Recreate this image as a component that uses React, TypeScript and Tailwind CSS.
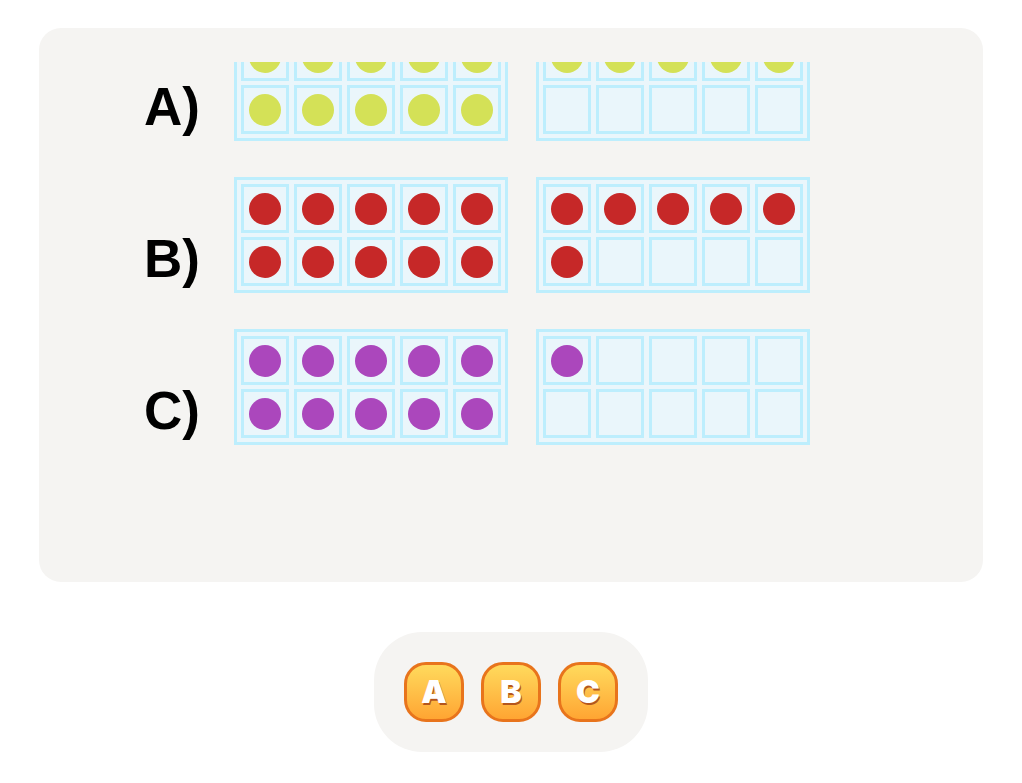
import React from 'react';

type Row = { label: string; color: string; counts: [number, number] };

const rows: Row[] = [
  { label: 'A)', color: 'bg-[#d4e157]', counts: [10, 5] },
  { label: 'B)', color: 'bg-[#c62828]', counts: [10, 6] },
  { label: 'C)', color: 'bg-[#ab47bc]', counts: [10, 1] },
];

// one ten-frame: 2 rows of 5 cells, filled left to right
const TenFrame: React.FC<{ filled: number; color: string }> = ({ filled, color }) => (
  <div className="border-[3px] border-[#bdeefd] bg-[#eaf6fb] p-[4px] grid grid-cols-5 gap-x-[5px] gap-y-[4px]">
    {Array.from({ length: 10 }).map((_, i) => (
      <div
        key={i}
        className="w-[48px] h-[49px] border-[3px] border-[#bdeefd] flex items-center justify-center"
      >
        {i < filled && <div className={`w-8 h-8 rounded-full ${color}`} />}
      </div>
    ))}
  </div>
);

const AnswerButton: React.FC<{ letter: string }> = ({ letter }) => (
  <button
    className="w-[60px] h-[60px] rounded-[22px] border-[3px] border-[#e8741c] bg-gradient-to-b from-[#ffda5c] to-[#ffa532] flex items-center justify-center text-white text-[32px] font-black leading-none [text-shadow:1px_2px_0_#b5561c]"
    style={{ fontFamily: 'Inter, "DejaVu Sans", sans-serif' }}
  >
    {letter}
  </button>
);

export default function App() {
  return (
    <div
      className="min-h-screen bg-white flex flex-col items-center pt-[28px]"
      style={{ fontFamily: '"Liberation Sans", Arial, sans-serif' }}
    >
      {/* question panel, scrolled a little */}
      <div className="w-[944px] h-[554px] rounded-[22px] bg-[#f5f4f2] pt-[34px] flex flex-col">
        <div className="flex-1 overflow-hidden">
          <div className="-mt-[37px] pl-[105px] flex flex-col gap-[36px]">
            {rows.map((row) => (
              <div key={row.label} className="flex items-start">
                <div className="w-[90px] pt-[55px] text-[53px] font-bold leading-none text-black">
                  {row.label}
                </div>
                <div className="flex gap-[28px]">
                  <TenFrame filled={row.counts[0]} color={row.color} />
                  <TenFrame filled={row.counts[1]} color={row.color} />
                </div>
              </div>
            ))}
          </div>
        </div>
      </div>

      {/* answer buttons */}
      <div className="mt-[50px] rounded-[48px] bg-[#f5f4f2] px-[30px] py-[30px] flex gap-[17px]">
        <AnswerButton letter="A" />
        <AnswerButton letter="B" />
        <AnswerButton letter="C" />
      </div>
    </div>
  );
}
